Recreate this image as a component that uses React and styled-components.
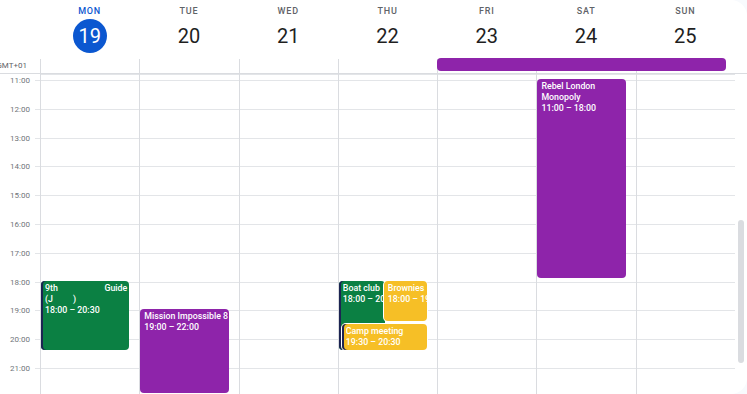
import styled, { createGlobalStyle } from "styled-components"

const HOUR = 28.8
const FIRST_HOUR = 11
const OFFSET = 6

const days = [
  { name: "MON", num: 19, today: true },
  { name: "TUE", num: 20 },
  { name: "WED", num: 21 },
  { name: "THU", num: 22 },
  { name: "FRI", num: 23 },
  { name: "SAT", num: 24 },
  { name: "SUN", num: 25 },
]

const hours = [11, 12, 13, 14, 15, 16, 17, 18, 19, 20, 21, 22]

const colors = {
  green: "#0b8043",
  purple: "#8e24aa",
  yellow: "#f6bf26",
}

const events = [
  { day: 0, start: 18, end: 20.5, color: "green", accent: true, guide: true, time: "18:00 – 20:30" },
  { day: 1, start: 19, end: 22, color: "purple", title: "Mission Impossible 8", time: "19:00 – 22:00" },
  { day: 3, start: 18, end: 20.5, color: "green", accent: true, title: "Boat club", time: "18:00 – 20:30", left: 0, width: 46 },
  { day: 3, start: 18, end: 19.5, color: "yellow", outline: true, title: "Brownies", time: "18:00 – 19:30", left: 45, right: 10 },
  { day: 3, start: 19.5, end: 20.5, color: "yellow", accent: true, outline: true, title: "Camp meeting", time: "19:30 – 20:30", left: 3, right: 10 },
  { day: 5, start: 11, end: 18, color: "purple", wrap: true, title: "Rebel London Monopoly", time: "11:00 – 18:00" },
]

export default function App() {
  return (
    <>
      <GlobalStyle />
      <Card>
        <Header>
          <span />
          {days.map((d) => (
            <DayHead key={d.name}>
              <DayName $today={d.today}>{d.name}</DayName>
              <DayNum $today={d.today}>{d.num}</DayNum>
            </DayHead>
          ))}
          <span />
        </Header>
        <AllDay>
          <Zone>GMT+01</Zone>
          {days.map((d, i) => (
            <AllDayCell key={d.name} style={{ gridColumn: i + 2 }} />
          ))}
          <AllDayEvent />
        </AllDay>
        <Body>
          <Gutter>
            {hours.map((h) => (
              <TimeSlot key={h}>
                <TimeLabel>{h}:00</TimeLabel>
                <Tick />
              </TimeSlot>
            ))}
          </Gutter>
          {days.map((d, i) => (
            <DayColumn key={d.name}>
              {events
                .filter((e) => e.day === i)
                .map((e, k) => (
                  <Event
                    key={k}
                    $color={colors[e.color]}
                    $accent={e.accent}
                    $outline={e.outline}
                    style={{
                      top: OFFSET - 1 + (e.start - FIRST_HOUR) * HOUR,
                      height: (e.end - e.start) * HOUR - 3,
                      left: e.left ?? 0,
                      width: e.width,
                      right: e.width ? undefined : e.right ?? 10,
                    }}
                  >
                    {e.guide ? (
                      <>
                        <GuideLine>
                          <span>9th</span>
                          <span>Guide</span>
                        </GuideLine>
                        <Line>
                          (J<Gap />)
                        </Line>
                      </>
                    ) : (
                      <Title $wrap={e.wrap}>{e.title}</Title>
                    )}
                    <Line>{e.time}</Line>
                  </Event>
                ))}
            </DayColumn>
          ))}
          <Track>
            <Thumb />
          </Track>
        </Body>
      </Card>
    </>
  )
}

const GlobalStyle = createGlobalStyle`
  html, body {
    margin: 0;
    padding: 0;
    background: #f8fafd;
    font-family: Roboto, "Noto Sans", Arial, sans-serif;
    overflow: hidden;
  }
`

const Card = styled.div`
  width: 747px;
  height: 394px;
  background: #ffffff;
  border-top-right-radius: 16px;
  border-bottom-right-radius: 16px;
  overflow: hidden;
  display: flex;
  flex-direction: column;
`

const Header = styled.div`
  display: grid;
  grid-template-columns: 40px repeat(7, 1fr) 12px;
  height: 58px;
`

const DayHead = styled.div`
  display: flex;
  flex-direction: column;
  align-items: center;
  padding-top: 6px;
`

const DayName = styled.div`
  font-size: 9px;
  font-weight: 500;
  letter-spacing: 0.8px;
  line-height: 11px;
  color: ${(p) => (p.$today ? "#0b57d0" : "#5f6368")};
`

const DayNum = styled.div`
  margin-top: 2px;
  width: 34px;
  height: 34px;
  border-radius: 50%;
  display: flex;
  align-items: center;
  justify-content: center;
  font-size: 20px;
  color: ${(p) => (p.$today ? "#ffffff" : "#1f1f1f")};
  background: ${(p) => (p.$today ? "#0b57d0" : "transparent")};
`

const AllDay = styled.div`
  display: grid;
  grid-template-columns: 40px repeat(7, 1fr) 12px;
  grid-template-rows: 15px;
  border-bottom: 1px solid #dadce0;
`

const Zone = styled.div`
  grid-column: 1;
  grid-row: 1;
  font-size: 8px;
  color: #5f6368;
  line-height: 15px;
  text-align: right;
  padding-right: 13px;
  white-space: nowrap;
  overflow: visible;
  direction: rtl;
`

const AllDayCell = styled.div`
  grid-row: 1;
  margin-top: 1px;
  border-left: 1px solid #dadce0;
`

const AllDayEvent = styled.div`
  grid-column: 6 / 9;
  grid-row: 1;
  height: 13px;
  margin-right: 9px;
  border-radius: 4px;
  background: ${colors.purple};
  z-index: 1;
`

const Body = styled.div`
  flex: 1;
  display: grid;
  grid-template-columns: 40px repeat(7, 1fr) 12px;
  overflow: hidden;
`

const Gutter = styled.div`
  padding-top: ${OFFSET}px;
`

const TimeSlot = styled.div`
  height: ${HOUR}px;
  display: flex;
  justify-content: flex-end;
  align-items: flex-start;
`

const TimeLabel = styled.span`
  font-size: 8px;
  line-height: 10px;
  margin-top: -4px;
  margin-right: 5px;
  color: #70757a;
`

const Tick = styled.span`
  width: 5px;
  border-top: 1px solid #e3e5e8;
`

const DayColumn = styled.div`
  position: relative;
  border-left: 1px solid #dadce0;
  background-image: repeating-linear-gradient(
    to bottom,
    #e3e5e8 0,
    #e3e5e8 1px,
    transparent 1px,
    transparent ${HOUR}px
  );
  background-position: 0 ${OFFSET}px;
`

const Event = styled.div`
  position: absolute;
  box-sizing: border-box;
  padding: 2px 0 0 4px;
  border-radius: 4px;
  background: ${(p) => p.$color};
  color: #ffffff;
  font-size: 8.8px;
  font-weight: 500;
  line-height: 11px;
  overflow: hidden;
  box-shadow: ${(p) =>
    [p.$accent ? "inset 2px 0 0 #1c2452" : null, p.$outline ? "0 0 0 1px #ffffff" : null]
      .filter(Boolean)
      .join(", ") || "none"};
`

const Title = styled.div`
  white-space: ${(p) => (p.$wrap ? "normal" : "nowrap")};
  padding-right: ${(p) => (p.$wrap ? "4px" : "0")};
  overflow: hidden;
`

const Line = styled.div`
  white-space: nowrap;
  overflow: hidden;
  display: flex;
`

const GuideLine = styled.div`
  display: flex;
  justify-content: space-between;
  white-space: nowrap;
  padding-right: 2px;
`

const Gap = styled.span`
  display: inline-block;
  width: 20px;
`

const Track = styled.div`
  display: flex;
  flex-direction: column;
  align-items: flex-end;
  padding-right: 3px;
`

const Thumb = styled.div`
  margin-top: 146px;
  width: 6px;
  height: 143px;
  border-radius: 3px;
  background: #dadce0;
`
